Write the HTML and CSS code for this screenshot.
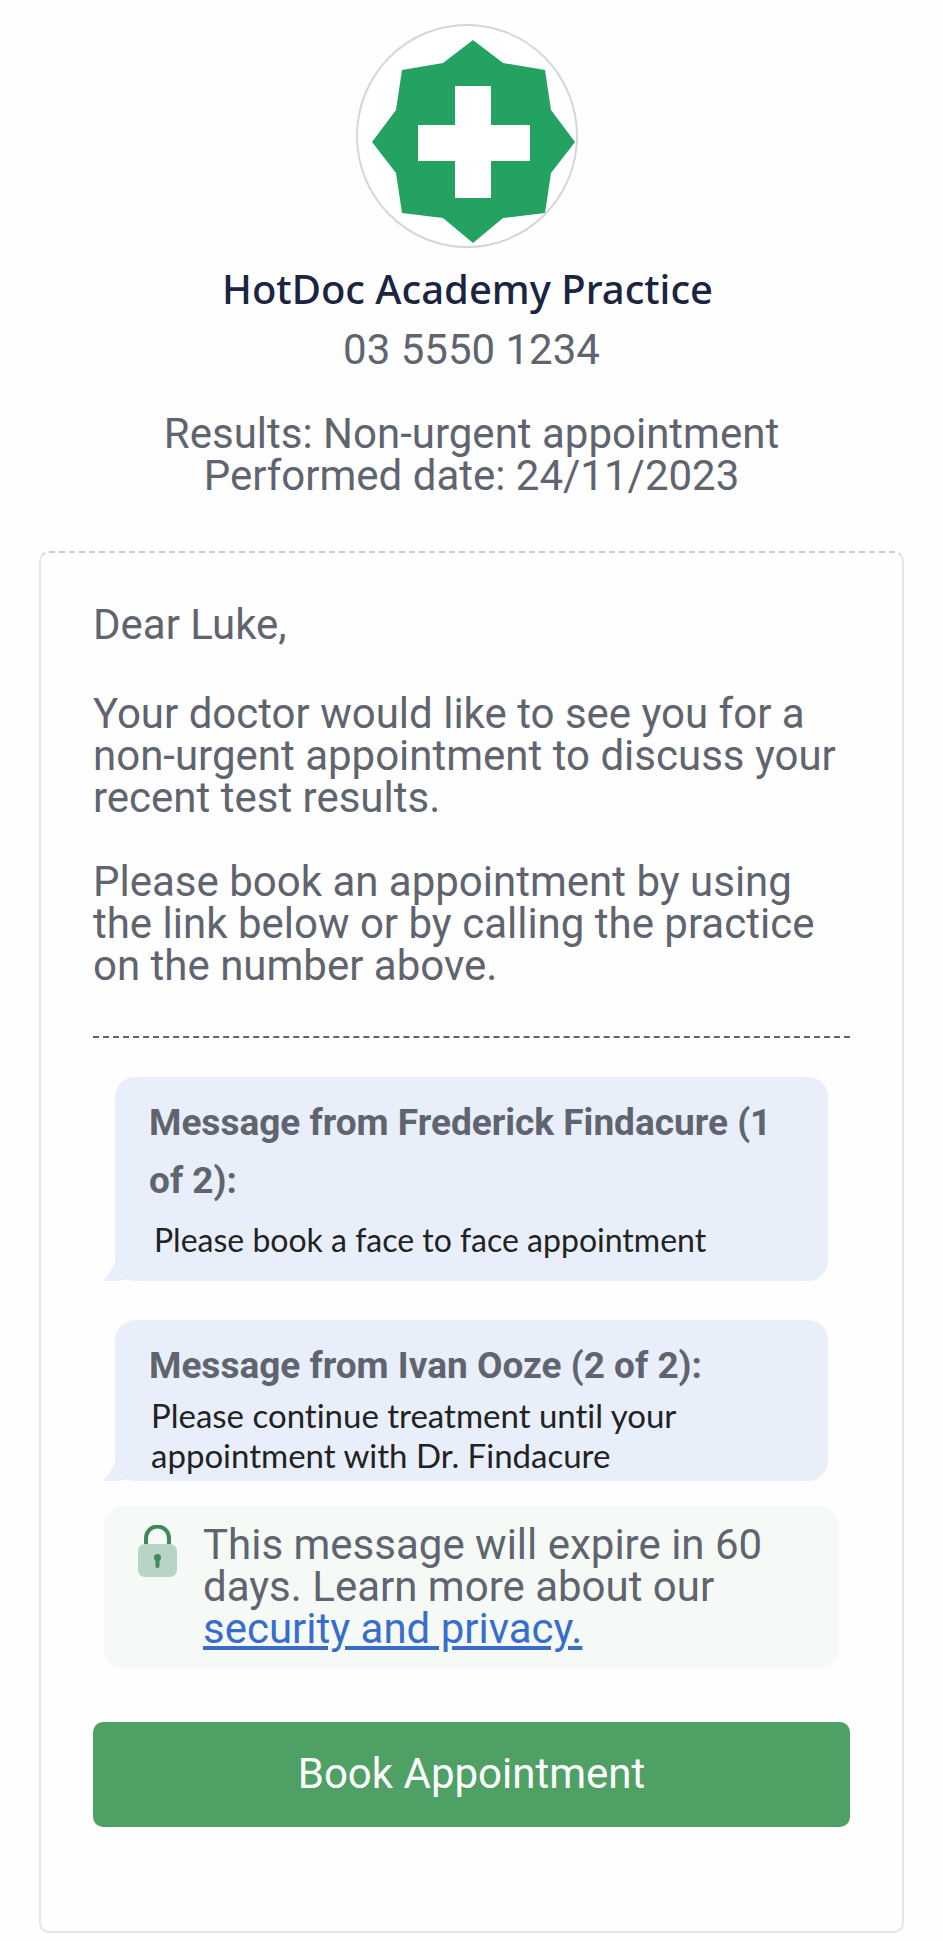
FILE: index.html
```html
<!DOCTYPE html>
<html lang="en">
<head>
<meta charset="utf-8">
<meta name="viewport" content="width=device-width, initial-scale=1">
<title>HotDoc Academy Practice</title>
<link rel="stylesheet" href="styles.css">
</head>
<body>
<header class="header">
  <svg class="logo" viewBox="0 0 224 224" aria-hidden="true">
    <ellipse cx="111" cy="112" rx="110" ry="111" fill="#fff" stroke="#d6d6d6" stroke-width="2"/>
    <path fill="#24a261" d="M117 16 147 39 189 46 195 86 219 118 195 149 189 189 147 194 117 219 87 194 46 189 40 149 16 118 40 86 46 46 87 39Z"/>
    <path fill="#fff" d="M99 62h36v39h39v36h-39v37H99v-37H62v-36h37z"/>
  </svg>
  <h1 class="practice">HotDoc Academy Practice</h1>
  <p class="phone">03 5550 1234</p>
  <p class="summary">Results: Non-urgent appointment<br>Performed date: 24/11/2023</p>
</header>
<main class="card">
  <p class="greeting">Dear Luke,</p>
  <p class="para">Your doctor would like to see you for a non-urgent appointment to discuss your recent test results.</p>
  <p class="para">Please book an appointment by using the link below or by calling the practice on the number above.</p>
  <hr class="divider">
  <section class="bubble bubble-single">
    <h2 class="sender">Message from Frederick Findacure (1 of 2):</h2>
    <p class="message">Please book a face to face appointment</p>
    <svg class="tail" viewBox="0 0 32 20" aria-hidden="true"><path fill="#e8effa" d="M12 0v1Q8 11 0 20h32V0z"/><path fill="#fefefe" d="M17 20q8-3 13 0z"/></svg>
  </section>
  <section class="bubble bubble-multi">
    <h2 class="sender">Message from Ivan Ooze (2 of 2):</h2>
    <p class="message">Please continue treatment until your appointment with Dr. Findacure</p>
    <svg class="tail" viewBox="0 0 32 20" aria-hidden="true"><path fill="#e8effa" d="M12 0v1Q8 11 0 20h32V0z"/><path fill="#fefefe" d="M17 20q8-3 13 0z"/></svg>
  </section>
  <aside class="notice">
    <svg class="lock" viewBox="0 0 39 52" aria-hidden="true">
      <path d="M8 20V13a11.500 11.500 0 0 1 23 0v7" fill="none" stroke="#40895a" stroke-width="4"/>
      <rect y="19" width="39" height="33" rx="7" fill="#b7d4c4"/>
      <circle cx="19.500" cy="32.500" r="3.500" fill="#40895a"/>
      <path d="M19.500 33v8" stroke="#40895a" stroke-width="4" stroke-linecap="round"/>
    </svg>
    <p>This message will expire in 60 days. Learn more about our <a class="link" href="#privacy">security and privacy.</a></p>
  </aside>
  <button class="book" type="button">Book Appointment</button>
</main>
</body>
</html>
```
FILE: styles.css
```css
* {
  box-sizing: border-box;
}

body {
  margin: 0;
  padding: 24px 39px 8px;
  background: #fefefe;
  color: #60646f;
  font: 42px/42px Roboto, sans-serif;
}

h1, h2, p {
  margin: 0;
}

.header {
  display: flex;
  flex-direction: column;
  align-items: center;
  text-align: center;
}

.logo {
  width: 224px;
  height: 224px;
  margin-right: 8px;
}

.practice {
  margin: 17px 8px 16px 0;
  color: #1b2440;
  font: 500 40px/48px "Noto Sans", sans-serif;
}

.summary {
  margin-top: 42px;
}

.card {
  margin-top: 54px;
  padding: 51px 52px 104px;
  border: 2px solid #e5e5e5;
  border-top: 2px dashed #ccc;
  border-radius: 10px;
}

.greeting {
  margin-bottom: 47px;
}

.para + .para {
  margin-top: 42px;
}

.divider {
  margin: 49px 0 39px;
  border: 0;
  border-top: 2px dashed #60646f;
}

.bubble {
  position: relative;
  margin: 0 22px 39px;
  padding: 17px 34px 6px;
  border-radius: 20px 20px 20px 0;
  background: #e8effa;
}

.bubble-single {
  padding-bottom: 21px;
}

.sender {
  font-size: 37px;
  font-weight: 700;
  line-height: 58px;
}

.message {
  padding: 0 2px;
  color: #222;
  font: 33px/40px Lato, sans-serif;
  font-variant-ligatures: none;
}

.bubble-single .message {
  padding: 10px 5px 0;
  font-size: 32px;
}

.bubble-multi {
  margin-bottom: 25px;
}

.tail {
  position: absolute;
  bottom: 0;
  left: -12px;
  width: 32px;
  height: 20px;
}

.notice {
  display: flex;
  align-items: flex-start;
  gap: 26px;
  margin: 0 11px 53px;
  padding: 18px 34px 19px;
  border-radius: 20px;
  background: #f5faf7;
}

.lock {
  flex: none;
  width: 39px;
  height: 52px;
  margin-top: 1px;
}

.link {
  color: #386dcb;
}

.book {
  display: block;
  width: 100%;
  padding: 31px 20px 32px;
  border: 0;
  border-radius: 10px;
  background: #4ea065;
  color: #fff;
  font: inherit;
}
```
